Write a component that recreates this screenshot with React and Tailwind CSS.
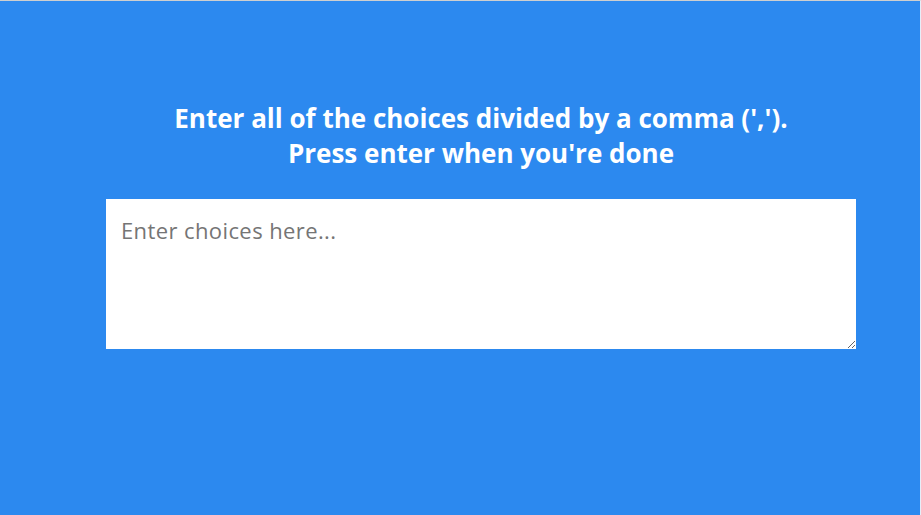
export default function App() {
  return (
    <div
      className="h-[515px] w-[921px] overflow-hidden border-t border-r border-t-[#cfcfcf] border-r-[#e6eef8] bg-[#2c89ef]"
      style={{ fontFamily: '"Open Sans", Lato, sans-serif' }}
    >
      <div className="flex flex-col items-center pt-[100px] pl-[42px]">
        <h1 className="text-center text-[26px] leading-[35px] font-bold text-white">
          Enter all of the choices divided by a comma (',').
          <br />
          Press enter when you're done
        </h1>
        <textarea
          className="mt-[28px] h-[150px] w-[750px] resize-y bg-white px-[15px] py-[16px] text-[22px] leading-[30px] tracking-[0.4px] text-[#333] outline-none placeholder:text-[#757575]"
          placeholder="Enter choices here..."
        />
      </div>
    </div>
  )
}
